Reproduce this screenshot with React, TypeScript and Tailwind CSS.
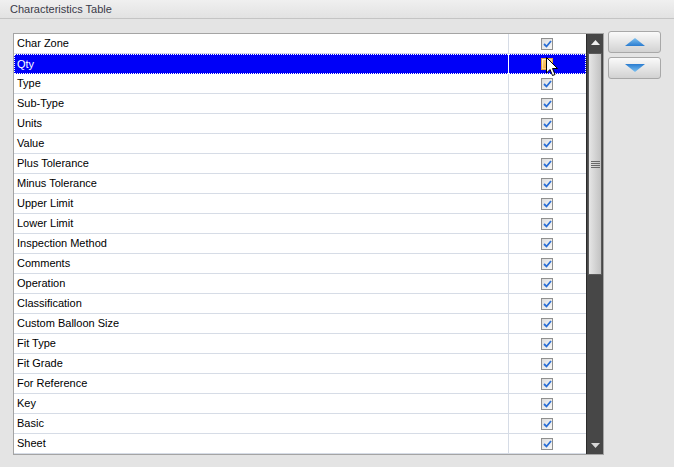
import React from "react";

const rows = [
  "Char Zone","Qty","Type","Sub-Type","Units","Value","Plus Tolerance","Minus Tolerance","Upper Limit","Lower Limit","Inspection Method","Comments","Operation","Classification","Custom Balloon Size","Fit Type","Fit Grade","For Reference","Key","Basic","Sheet",
];

function Check({ hover }: { hover?: boolean }) {
  if (hover) {
    return (
      <div className="w-[12px] h-[12px] border border-[#e0a040] bg-gradient-to-br from-[#fff3c8] to-[#f8b848] flex items-center justify-center">
        <div className="w-[8px] h-[8px] bg-gradient-to-br from-[#ffd070] to-[#f0a030]" />
      </div>
    );
  }
  return (
    <div className="w-[12px] h-[12px] border border-[#8e8f8f] bg-gradient-to-br from-[#dcdcdc] to-[#f8f8f8] flex items-center justify-center">
      <svg width="9" height="8" viewBox="0 0 9 8">
        <path d="M1 4 L3.5 6.5 L8 1" stroke="#2a6fd6" strokeWidth="1.8" fill="none" />
      </svg>
    </div>
  );
}

function Cursor() {
  return (
    <svg className="absolute left-[546px] top-[57px]" width="14" height="22" viewBox="0 0 14 22">
      <path d="M0.5 0.5 L0.5 16 L4 12.5 L6.5 18.5 L9 17.5 L6.5 11.5 L11.5 11.5 Z" fill="#fff" stroke="#000" strokeWidth="1" />
    </svg>
  );
}

export default function App() {
  return (
    <div className="w-[674px] h-[467px] bg-[#e4e4e4] relative overflow-hidden" style={{ fontFamily: '"Liberation Sans", Arial, sans-serif' }}>
      <div className="h-[19px] bg-gradient-to-b from-[#f0f0f0] to-[#e2e2e2] border-b border-[#c4c4c4] pl-[10px] pt-[1px] flex items-center text-[11px] text-[#3a3a48]">
        Characteristics Table
      </div>
      <div className="flex mt-[14px] ml-[13px] items-start">
        <div className="w-[591px] h-[422px] border border-[#a4a4a4] bg-white flex">
          <div className="flex-1 flex flex-col">
            {rows.map((r, i) => {
              const sel = i === 1;
              return (
                <div
                  key={r}
                  className={
                    sel
                      ? "h-[20px] flex bg-[#0000f8] text-white outline-1 outline-dotted outline-white -outline-offset-1"
                      : "h-[20px] flex border-b border-[#d6dce6] text-[#000]"
                  }
                >
                  <div className={sel ? "w-[495px] pl-[3px] flex items-center text-[11px] border-r border-white" : "w-[495px] pl-[3px] flex items-center text-[11px] border-r border-[#d6dce6]"}>
                    {r}
                  </div>
                  <div className="flex-1 flex items-center justify-center pr-[1px]">
                    <Check hover={sel} />
                  </div>
                </div>
              );
            })}
          </div>
          <div className="w-[17px] bg-[#474747] border-l border-[#2a2a2a] flex flex-col">
            <div className="h-[17px] flex items-center justify-center">
              <svg width="9" height="5" viewBox="0 0 9 5"><path d="M0 5 L4.5 0 L9 5 Z" fill="#f0f0f0" /></svg>
            </div>
            <div className="mx-[1px] mt-[2px] h-[222px] bg-gradient-to-r from-[#e6e6e6] via-[#d4d4d4] to-[#c2c2c2] border border-[#5a5a5a] flex items-center justify-center">
              <div className="flex flex-col gap-[1px]">
                <div className="w-[9px] h-[1px] bg-[#6a6a6a]" />
                <div className="w-[9px] h-[1px] bg-[#6a6a6a]" />
                <div className="w-[9px] h-[1px] bg-[#6a6a6a]" />
                <div className="w-[9px] h-[1px] bg-[#6a6a6a]" />
              </div>
            </div>
            <div className="flex-1" />
            <div className="h-[17px] flex items-center justify-center">
              <svg width="9" height="5" viewBox="0 0 9 5"><path d="M0 0 L4.5 5 L9 0 Z" fill="#d8d8d8" /></svg>
            </div>
          </div>
        </div>
        <div className="ml-[4px] flex flex-col gap-[4px] -mt-[2px]">
          <div className="w-[53px] h-[22px] rounded-[3px] border border-[#a8a8a8] bg-gradient-to-b from-[#fafafa] via-[#e6e6e6] to-[#d2d2d2] flex items-center justify-center">
            <svg width="20" height="8" viewBox="0 0 20 8"><defs><linearGradient id="gu" x1="0" y1="0" x2="0" y2="1"><stop offset="0" stopColor="#7cc0f0" /><stop offset="1" stopColor="#2a7cd0" /></linearGradient></defs><path d="M0 8 L10 0 L20 8 Z" fill="url(#gu)" /></svg>
          </div>
          <div className="w-[53px] h-[22px] rounded-[3px] border border-[#a8a8a8] bg-gradient-to-b from-[#fafafa] via-[#e6e6e6] to-[#d2d2d2] flex items-center justify-center">
            <svg width="20" height="8" viewBox="0 0 20 8"><defs><linearGradient id="gd" x1="0" y1="0" x2="0" y2="1"><stop offset="0" stopColor="#2a7cd0" /><stop offset="1" stopColor="#7cc0f0" /></linearGradient></defs><path d="M0 0 L10 8 L20 0 Z" fill="url(#gd)" /></svg>
          </div>
        </div>
      </div>
      <Cursor />
    </div>
  );
}
